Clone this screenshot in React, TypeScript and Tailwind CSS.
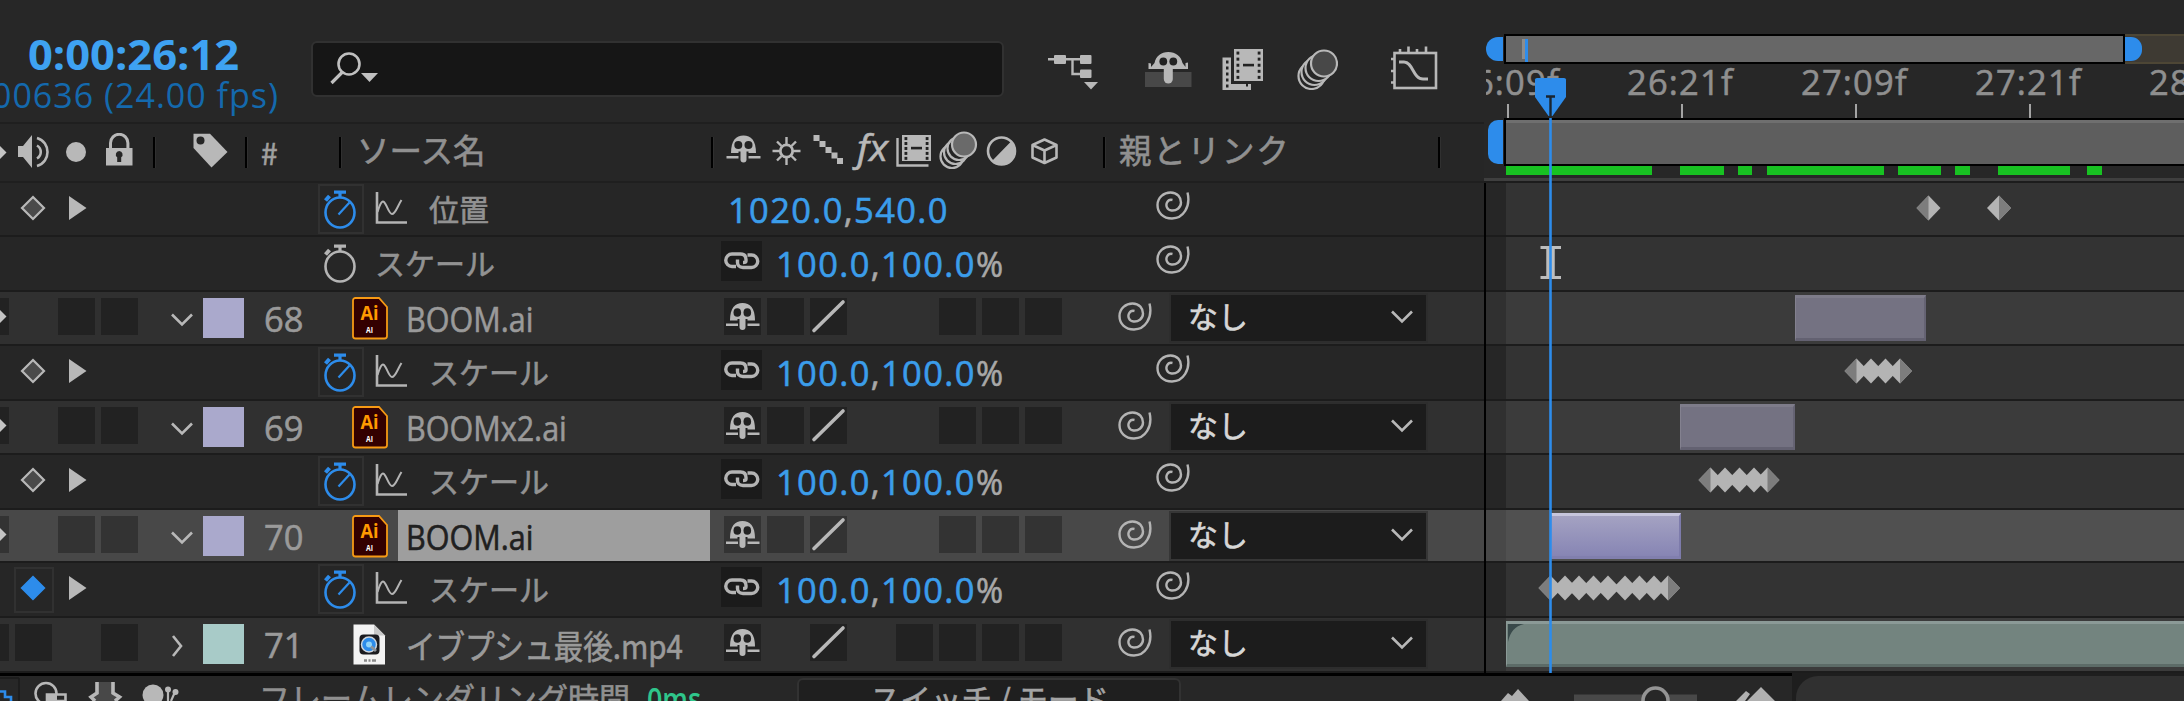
import type { ReactNode } from "react";
import clsx from "clsx";

const LATIN = "font-['Open_Sans','Noto_Sans_CJK_JP',sans-serif]";
const JP = "font-['Noto_Sans_CJK_JP',sans-serif]";

// thickens the thin faces a little, as the panel text is light on dark
const STROKE = "[-webkit-text-stroke:0.6px_currentColor]";

type Row = {
  kind: "layer" | "prop";
  h: number;
  num?: string;
  name: string;
  file?: "ai" | "mp4";
  selected?: boolean;
  animated?: boolean;
  keyOn?: boolean;
  value?: [string, string];
  percent?: boolean;
  bar?: [number, number];
  keys?: number[];
};

// bar and key positions are measured from the left edge of the lane
const ROWS: Row[] = [
  { kind: "prop", h: 54, name: "位置", animated: true, value: ["1020.0", "540.0"], keys: [422.5, 493] },
  { kind: "prop", h: 55, name: "スケール", value: ["100.0", "100.0"], percent: true },
  { kind: "layer", h: 54, num: "68", name: "BOOM.ai", file: "ai", bar: [289, 131] },
  { kind: "prop", h: 55, name: "スケール", animated: true, value: ["100.0", "100.0"], percent: true, keys: [350.5, 365, 379.5, 394] },
  { kind: "layer", h: 54, num: "69", name: "BOOMx2.ai", file: "ai", bar: [174, 115] },
  { kind: "prop", h: 55, name: "スケール", animated: true, value: ["100.0", "100.0"], percent: true, keys: [204.5, 219, 233.5, 248, 261.5] },
  { kind: "layer", h: 53, num: "70", name: "BOOM.ai", file: "ai", selected: true, bar: [45, 130] },
  {
    kind: "prop", h: 55, name: "スケール", animated: true, keyOn: true, value: ["100.0", "100.0"], percent: true,
    keys: [44.5, 59, 73, 87.5, 102, 119, 133.5, 148, 162],
  },
  { kind: "layer", h: 55, num: "71", name: "イブプシュ最後.mp4", file: "mp4", bar: [0, 700] },
];

function Spiral({ className }: { className?: string }) {
  return (
    <svg width="34" height="30" viewBox="0 0 34 30" fill="none" stroke="#b4b4b4" strokeWidth="2.400" className={clsx("shrink-0", className)}>
      <path d="M31.500 1.500C35 16 27 27.500 16 27.500 7 27.500 1.500 21.500 1.500 14 1.500 6.500 8 1.500 14.500 1.500 21.500 1.500 25 6.500 25 11.500 25 17 20 20 15.500 19.500 11 19 9.500 14.500 11 11.500 12.300 9 14.500 8.500 16.500 9" />
    </svg>
  );
}

function Shy({ className }: { className?: string }) {
  return (
    <svg width="36" height="28" viewBox="0 0 36 28" className={clsx("shrink-0", className)}>
      <path d="M5 17.500C5 5 10 0 17.500 0S30 5 30 17.500Z" fill="#b8b8b8" />
      <ellipse cx="12.300" cy="9.500" rx="3.800" ry="4.300" fill="#222" />
      <ellipse cx="22.300" cy="9.500" rx="3.800" ry="4.300" fill="#222" />
      <path d="M12.500 18V16h10v2" fill="#222" />
      <path d="M1 21.700h12M22.500 21.700h12" stroke="#b8b8b8" strokeWidth="2.600" />
      <path d="M14.500 15h6v9a3 3 0 0 1-6 0Z" fill="#b8b8b8" />
    </svg>
  );
}

function Stopwatch({ on }: { on?: boolean }) {
  return (
    <svg width="34" height="39" viewBox="0 0 34 39" fill="none" stroke={on ? "#2d8ceb" : "#b4b4b4"}>
      <ellipse cx="17" cy="22.500" rx="14.500" ry="15" strokeWidth="2.600" />
      <path d="M11 2.200h12M17 2v6" strokeWidth="3.200" />
      <path d="M2.500 10.500 6.500 6" strokeWidth="4" />
      {on && <path d="M15.500 24.500 26.500 12.500" strokeWidth="2.200" />}
    </svg>
  );
}

function GraphIcon() {
  return (
    <svg width="33" height="34" viewBox="0 0 33 34" fill="none" stroke="#b4b4b4">
      <path d="M2 1v30.500h30" strokeWidth="2.600" />
      <path d="M2.500 21C5 13 7 9 9 11c3 3 5 12 8 12 3.500 0 5.500-8 9.500-14" strokeWidth="2" />
    </svg>
  );
}

function Chain() {
  return (
    <svg width="36" height="18" viewBox="0 0 36 18" fill="none" stroke="#b4b4b4" strokeWidth="3.400">
      <path d="M12 14.500H8a6.200 6.200 0 0 1 0-12.500h8.500c4 0 5.500 2.500 5.500 5.500v1.500c0 1-1 1.500-3 1.500" />
      <path d="M23.500 3h4a6.200 6.200 0 0 1 0 12.500H19c-4 0-5.500-2.500-5.500-5V7.500" />
    </svg>
  );
}

function AiIcon() {
  return (
    <svg width="36" height="43" viewBox="0 0 36 43" className="mt-[5px] shrink-0">
      <path d="M3.500 1H27l8 9v29a2.500 2.500 0 0 1-2.500 2.500h-29A2.500 2.500 0 0 1 1 39V3.500A2.500 2.500 0 0 1 3.500 1Z" fill="#300" stroke="#f79a14" strokeWidth="1.800" />
      <text x="17.500" y="23" textAnchor="middle" fontSize="19" fontWeight="700" fill="#ff9a00" fontFamily="Open Sans" textLength="18" lengthAdjust="spacingAndGlyphs">Ai</text>
      <text x="17.500" y="36" textAnchor="middle" fontSize="8.500" fontWeight="700" fill="#fff" fontFamily="Open Sans" textLength="7" lengthAdjust="spacingAndGlyphs">AI</text>
    </svg>
  );
}

function MovieIcon() {
  return (
    <svg width="36" height="42" viewBox="0 0 36 42" className="mt-[6px] shrink-0">
      <path d="M1.500.500H22L33 11.500V40.500H1.500Z" fill="#f3f3f3" />
      <path d="M22 .500V11.500H33Z" fill="#c9c9c9" />
      <rect x="7.500" y="10.500" width="20" height="20" rx="4" fill="#1b1b1f" />
      <circle cx="17" cy="20.500" r="7.500" fill="#2d8ceb" stroke="#cfd6de" strokeWidth="1.500" />
      <circle cx="17" cy="20.500" r="3" fill="#8fd3fa" />
      <path d="M19 22.500 24 27" stroke="#8d949c" strokeWidth="3" />
      <path d="M12 36.500h3M16.500 36.500h2M20 36.500h4" stroke="#8a8a8a" strokeWidth="2.500" />
    </svg>
  );
}

function Chevron({ right, className }: { right?: boolean; className?: string }) {
  return (
    <svg width="22" height="22" viewBox="0 0 22 22" fill="none" stroke="#b8b8b8" strokeWidth="2.600" className={clsx("shrink-0", className)}>
      {right ? <path d="M2 1 10 11 2 21" /> : <path d="M1 5.500 11 15.500 21 5.500" />}
    </svg>
  );
}

function Blur({ w, h, fill }: { w: number; h: number; fill: string }) {
  return (
    <svg width={w} height={h} viewBox="0 0 41 41" preserveAspectRatio="none" fill="#262626" stroke="#b8b8b8" strokeWidth="2.200">
      <circle cx="14.500" cy="27" r="13" />
      <circle cx="17.500" cy="23" r="13" />
      <circle cx="21.500" cy="19" r="13" />
      <circle cx="27" cy="14.500" r="13" fill={fill} />
    </svg>
  );
}

function Divider({ className }: { className?: string }) {
  return <span className={clsx("mt-[13px] h-[31px] w-[3px] shrink-0 border-l-2 border-black bg-[#303030]", className)} />;
}

function Cell({ on, selected, children }: { on?: boolean; selected?: boolean; children?: ReactNode }) {
  return (
    <span className={clsx("mt-[6px] flex h-[37px] w-[37px] shrink-0 items-center justify-center", on && (selected ? "bg-[#333]" : "bg-[#222]"))}>
      {children}
    </span>
  );
}

function LayerRow({ row }: { row: Row }) {
  const { selected } = row;
  const mp4 = row.file === "mp4";
  return (
    <div className={clsx("flex shrink-0 border-b-2 border-[#1c1c1c]", selected ? "bg-[#484848]" : "bg-[#303030]")} style={{ height: row.h }}>
      <div className="flex w-[138px] shrink-0 gap-1.5">
        <span className={clsx("mt-[6px] h-[37px] w-[9px] shrink-0", selected ? "bg-[#333]" : "bg-[#222]")}>
          {!mp4 && (
            <svg width="9" height="37" viewBox="0 0 9 37">
              <path d="M0 12 6.500 18.500 0 25Z" fill="#c4c4c4" />
            </svg>
          )}
        </span>
        <Cell on={mp4} />
        <Cell on={!mp4} selected={selected} />
        <Cell on selected={selected} />
      </div>
      <div className="w-[65px] shrink-0 pt-[17px] pl-[33px]">
        <Chevron right={mp4} />
      </div>
      <div className={clsx("mt-[6px] h-10 w-[41px] shrink-0", mp4 ? "bg-[#a8cbc8]" : "bg-[#aaa9cc]")} />
      <div className={clsx("w-[108px] shrink-0 pt-[9px] pl-[20px] text-[34.500px] leading-9 text-[#9a9a9a]", LATIN, STROKE)}>{row.num}</div>
      {mp4 ? <MovieIcon /> : <AiIcon />}
      <div
        className={clsx(
          "ml-[10px] w-[312px] shrink-0 pl-[8px] whitespace-nowrap",
          selected ? "bg-[#9e9e9e] text-[#202020]" : "text-[#9a9a9a]",
        )}
      >
        <span
          className={clsx(
            "inline-block origin-left",
            STROKE,
            mp4
              ? `${JP} scale-x-[0.895] pt-[7px] text-[33px] leading-10`
              : `${LATIN} scale-x-[0.885] pt-[7px] text-[34.500px] leading-10`,
          )}
        >
          {row.name}
        </span>
      </div>
      <div className="ml-[14px] flex w-[338px] shrink-0 gap-1.5">
        <Cell on selected={selected}>
          <Shy className="mt-[1px]" />
        </Cell>
        <Cell on={!mp4} selected={selected} />
        <Cell on selected={selected}>
          <svg width="37" height="37" viewBox="0 0 37 37">
            <path d="M4 32.500 33 4" stroke="#b8b8b8" strokeWidth="3.600" strokeLinecap="round" />
          </svg>
        </Cell>
        <Cell />
        <Cell on={mp4} />
        <Cell on selected={selected} />
        <Cell on selected={selected} />
        <Cell on selected={selected} />
      </div>
      <Spiral className="mt-[10px] ml-[56px]" />
      <div
        className={clsx(
          "mt-[3px] ml-[19px] flex h-[46px] w-[255px] shrink-0 items-center justify-between bg-[#1c1c1c] pr-[13px] pl-[17px] outline-2",
          selected ? "outline-[#363636]" : "outline-[#2d2d2d]",
        )}
      >
        <span className={clsx("pb-[7px] text-[30px] leading-none text-[#d6d6d6]", JP, STROKE)}>なし</span>
        <Chevron className="mb-0.5" />
      </div>
    </div>
  );
}

function PropRow({ row }: { row: Row }) {
  return (
    <div className="flex shrink-0 border-b-2 border-[#1c1c1c] bg-[#262626]" style={{ height: row.h }}>
      <div className="flex w-[318px] shrink-0">
        {row.animated && (
          <>
            <span className={clsx("mt-1 ml-[14px] flex h-[46px] w-10 items-center justify-center border-2 pr-[2px] pb-1", row.keyOn ? "border-[#313131]" : "border-transparent")}>
              <svg width="26" height="26" viewBox="0 0 26 26" className="shrink-0">
                <path
                  d="M13 2 24 13 13 24 2 13Z"
                  fill={row.keyOn ? "#2d8ceb" : "#4a4a4a"}
                  stroke={row.keyOn ? "#2d8ceb" : "#b8b8b8"}
                  strokeWidth="2.200"
                />
              </svg>
            </span>
            <svg width="18" height="24" viewBox="0 0 18 24" className="mt-[13px] ml-[15px]">
              <path d="M0 0 17.500 12 0 24Z" fill="#b8b8b8" />
            </svg>
          </>
        )}
      </div>
      <span className={clsx("mt-[1px] flex h-[50px] w-[46px] shrink-0 items-center justify-center border-2 pr-0.5", row.animated ? "border-[#313131]" : "border-transparent")}>
        <Stopwatch on={row.animated} />
      </span>
      <div className="flex w-[357px] shrink-0 pl-[11px]">
        {row.animated && (
          <span className="mt-[8px] mr-[21px]">
            <GraphIcon />
          </span>
        )}
        <span className={clsx("pt-[9px] text-[30px] leading-8 whitespace-nowrap text-[#929292]", JP, STROKE)}>{row.name}</span>
      </div>
      <div className="flex w-[435px] shrink-0 text-[#3b9dea]">
        {row.percent ? (
          <span className="mt-1 mr-[14px] flex h-10 w-[41px] shrink-0 items-center justify-center bg-[#1b1b1b]">
            <Chain />
          </span>
        ) : (
          <span className="w-[7px] shrink-0" />
        )}
        <span className={clsx("pt-[9px] text-[34.500px] leading-9 tracking-[1.350px] whitespace-nowrap", LATIN, STROKE)}>
          {row.value?.[0]}
          <span className="text-[#a8a8a8]">,</span>
          {row.value?.[1]}
          {row.percent && <span className="inline-block origin-left scale-x-[0.95] text-[#a8a8a8]">%</span>}
        </span>
      </div>
      <Spiral className="mt-[8px]" />
    </div>
  );
}

function Film({ x, y, w, h }: { x: number; y: number; w: number; h: number }) {
  const holes = [0.08, 0.27, 0.46, 0.65, 0.84];
  return (
    <g>
      <rect x={x} y={y} width={w} height={h} fill="#b8b8b8" />
      {holes.map((t) => (
        <g key={t} fill="#222">
          <rect x={x + 2.5} y={y + t * h} width="2.800" height="3" />
          <rect x={x + w - 5.3} y={y + t * h} width="2.800" height="3" />
        </g>
      ))}
      <rect x={x + w / 2 - 5.5} y={y + h / 2 - 1.2} width="11" height="2.600" fill="#222" />
    </g>
  );
}

function TopBar() {
  return (
    <div className="flex h-[122px] shrink-0 bg-[#272727]">
      <div className={clsx("w-[311px] shrink-0 whitespace-nowrap", LATIN)}>
        <div className="mt-[33px] h-[41px] origin-left scale-x-[1.035] pl-[27px] text-[42px] leading-[42px] font-bold text-[#3ea2f2]">0:00:26:12</div>
        <div className="-ml-[21px] flex w-[300px] justify-end text-[34px] leading-[42px] tracking-[1px] text-[#1469ad]">00636 (24.00 fps)</div>
      </div>
      <div className="mt-[41px] flex h-[56px] w-[693px] shrink-0 items-center rounded-md border-2 border-[#313131] bg-[#161616] pl-[16px]">
        <svg width="50" height="36" viewBox="0 0 50 36">
          <circle cx="20" cy="13" r="10.500" fill="none" stroke="#c0c0c0" strokeWidth="2.600" />
          <path d="M13.500 21 2.500 32" stroke="#c0c0c0" strokeWidth="3.200" />
          <path d="M32 22h17l-8.500 9Z" fill="#c0c0c0" />
        </svg>
      </div>
      <svg width="50" height="36" viewBox="0 0 50 36" className="mt-[54px] ml-[44px] shrink-0">
        <g fill="#b8b8b8">
          <rect x="6" y="1" width="12" height="9" rx="1" />
          <rect x="32" y="1" width="11.500" height="9" rx="1" />
          <rect x="32" y="15.500" width="11.500" height="8.500" rx="1" />
          <path d="M36 28h14l-7 7.500Z" />
        </g>
        <path d="M0 5.200h34M24.500 5v15h8" stroke="#b8b8b8" strokeWidth="2.400" fill="none" />
      </svg>
      <svg width="47" height="36" viewBox="0 0 47 36" className="mt-[51px] ml-[47px] shrink-0">
        <rect x="0" y="21" width="46.500" height="15" fill="#484848" />
        <path d="M3.500 18V12l2.500.500v3.500l3.500-4C11 5 16 1 23.300 1S36 5 37.500 12l3 4V12l2.500-.500v6.500Z" fill="#b8b8b8" />
        <circle cx="18.300" cy="10.500" r="3.900" fill="#222" />
        <circle cx="28.300" cy="10.500" r="3.900" fill="#222" />
        <path d="M18.800 16h9v12a4.500 4.500 0 0 1-9 0Z" fill="#b8b8b8" />
      </svg>
      <svg width="42" height="42" viewBox="0 0 42 42" className="mt-[49px] ml-[30px] shrink-0">
        <path d="M.500 8.500H9V35H29V41H.500Z" fill="#b8b8b8" />
        <path d="M4 11.500h2.500v3H4zM4 17.500h2.500v3H4zM4 23.500h2.500v3H4zM4 29.500h2.500v3H4zM4 35.500h2.500v3H4zM24 34h2v3.500h-2z" fill="#222" />
        <Film x={12} y={0} w={29} h={32} />
      </svg>
      <span className="mt-[49px] ml-[33px] shrink-0">
        <Blur w={41} h={41} fill="#484848" />
      </span>
      <svg width="48" height="44" viewBox="0 0 48 44" fill="none" stroke="#b8b8b8" strokeWidth="2.600" className="mt-[46px] ml-[52px] shrink-0">
        <rect x="4.500" y="7" width="41.500" height="35" />
        <path d="M10 7V3M18.500 7V.500M27 7V3M36 7V.500M4 13H1M4 25H1M4 36.500H1" />
        <path d="M9 16h5c9 0 9 17 19 17h5" strokeWidth="3" />
      </svg>
    </div>
  );
}

function ColumnHeader() {
  return (
    <div className={clsx("flex h-[61px] shrink-0 border-t-2 border-b-2 border-[#1f1f1f] bg-[#262626] leading-none whitespace-nowrap text-[#909090]", JP)}>
      <div className="flex w-[153px] shrink-0">
        <svg width="138" height="36" viewBox="0 0 138 36" className="mt-[9px]">
          <path d="M0 13 6.500 19.500 0 26Z" fill="#c4c4c4" />
          <path d="M18 13h5l9-11v33l-9-11h-5Z" fill="#b8b8b8" />
          <path d="M37 12.500c5 3 5 10 0 13M37 5c14 4 14 24 0 28" fill="none" stroke="#b8b8b8" strokeWidth="2.600" />
          <circle cx="76" cy="19" r="10" fill="#b8b8b8" />
          <path d="M106 15h26.500v17.500H106z" fill="#b8b8b8" />
          <path d="M110.500 15V10a8.700 8.700 0 0 1 17.400 0v5" fill="none" stroke="#b8b8b8" strokeWidth="3" />
          <path d="M119.200 18a3.500 3.500 0 0 1 2 6.300V29h-4v-4.700a3.500 3.500 0 0 1 2-6.300Z" fill="#262626" />
        </svg>
      </div>
      <Divider />
      <svg width="36" height="35" viewBox="0 0 36 35" className="mt-[9px] ml-[37px] shrink-0">
        <path d="M.500.800H17L34.500 19 18.500 34.500.500 15Z" fill="#b8b8b8" />
        <circle cx="7.500" cy="7.500" r="4" fill="#262626" />
      </svg>
      <Divider className="ml-[16px]" />
      <div className={clsx("w-[91px] shrink-0 pt-[13px] pl-[13px] text-[30px] text-[#a0a0a0]", STROKE)}>#</div>
      <Divider />
      <div className={clsx("w-[369px] shrink-0 pt-[9px] pl-[15px] text-[32.500px]", STROKE)}>ソース名</div>
      <Divider />
      <svg width="344" height="44" viewBox="0 0 344 44" className="mt-[6px] ml-[11px] shrink-0">
        <g transform="translate(1 5.500)">
          <path d="M5 17.500C5 5 10 0 17.500 0S30 5 30 17.500Z" fill="#b8b8b8" />
          <circle cx="12.300" cy="9.500" r="4" fill="#222" />
          <circle cx="22.500" cy="9.500" r="4" fill="#222" />
          <path d="M12.500 18V16h10v2" fill="#222" />
          <path d="M.500 21.700h12M22.500 21.700h12" stroke="#b8b8b8" strokeWidth="2.600" />
          <path d="M14.500 15h6v9a3 3 0 0 1-6 0Z" fill="#b8b8b8" />
        </g>
        <g stroke="#b8b8b8" strokeWidth="2.400" fill="none">
          <circle cx="61.500" cy="21" r="6.200" strokeWidth="2.800" />
          <path d="M61.500 7v7M61.500 28v7M47.500 21h7M68.500 21h7M52 11.500l4.500 4.500M71 11.500 66.500 16M52 30.500l4.500-4.500M71 30.500 66.500 26" />
        </g>
        <path d="M88.500 5h6v6h-6zM94.500 11h6v6h-6zM100.500 17h6v6h-6zM106.500 22.500h6v6h-6zM112 28h6v6h-6z" fill="#b8b8b8" />
        <text x="132" y="30.500" fontSize="37" fontStyle="italic" fontFamily="Open Sans" fill="#b8b8b8" stroke="#b8b8b8" strokeWidth=".600" textLength="31" lengthAdjust="spacingAndGlyphs">fx</text>
        <path d="M172.500 8v27.500h31" fill="none" stroke="#b8b8b8" strokeWidth="2.400" />
        <Film x={177} y={5} w={29} h={26} />
        <g fill="#262626" stroke="#b8b8b8" strokeWidth="2.200">
          <circle cx="227" cy="26.500" r="11.500" />
          <circle cx="230.500" cy="22.500" r="11.500" />
          <circle cx="234" cy="18.500" r="11.500" />
          <circle cx="239" cy="14.500" r="12" fill="#6a6a6a" />
        </g>
        <circle cx="276.500" cy="21" r="13.500" fill="none" stroke="#b8b8b8" strokeWidth="2.600" />
        <path d="M286.500 11 267 31a13.500 13.500 0 0 0 19.500-20Z" fill="#b8b8b8" />
        <path d="M319.500 9.500 331.500 15v12.500l-12 5.500-12-5.500V15Zm-12 5.500 12 5.500 12-5.500m-12 5.500V33" fill="none" stroke="#b8b8b8" strokeWidth="2.600" strokeLinejoin="round" />
      </svg>
      <Divider className="ml-[34px]" />
      <div className={clsx("w-[332px] shrink-0 pt-[9px] pl-[13px] text-[32.500px] tracking-[1.800px]", STROKE)}>親とリンク</div>
      <Divider />
    </div>
  );
}

const LABELS = ["26:09f", "26:21f", "27:09f", "27:21f", "28:09f"];

// cached frames: start and width
const CACHED = [[0, 146], [174, 44], [232, 14], [261, 117], [392, 43], [449, 15], [492, 72], [581, 15]];

function TimeRuler() {
  return (
    <div className="flex h-[183px] shrink-0 flex-col bg-[#272727]">
      <div className="mt-[34px] flex h-[30px] shrink-0 pl-0.5">
        <span className="mt-[3px] h-6 w-[17px] shrink-0 rounded-l-[12px] bg-[#2d8ceb]" />
        <div className="ml-px flex w-[621px] shrink-0 border-2 border-black bg-[#676767]">
          <span className="mt-[3px] ml-[16px] h-5 w-[3px] bg-[#8d8d8d]" />
          <span className="mt-[3px] h-[23px] w-[3px] bg-[#2d8ceb]" />
        </div>
        <div className="flex-1 border-y-2 border-[#4d4635] bg-[#3e3a33] pt-px">
          <div className="h-6 w-[17px] rounded-r-[11px] bg-[#2d8ceb]" />
        </div>
      </div>
      <div className="ml-0.5 flex h-[54px] shrink-0 overflow-hidden">
        <div className="-ml-[33px] flex">
          {LABELS.map((label) => (
            <div key={label} className={clsx("w-[174px] shrink-0", LATIN)}>
              <div className={clsx("h-10 text-[34.500px] leading-9 tracking-[1.200px] text-[#8f8f8f]", STROKE)}>{label}</div>
              <div className="ml-[54px] h-[14px] w-0.5 bg-[#a4a4a4]" />
            </div>
          ))}
        </div>
      </div>
      <div className="flex h-12 shrink-0 pl-[4px]">
        <span className="mt-[2px] h-[44px] w-[15px] shrink-0 rounded-l-[10px] bg-[#2d8ceb]" />
        <div className="ml-px flex-1 border-y-2 border-l-2 border-black">
          <div className="h-[3px] bg-[#6f6f6f]" />
          <div className="h-[41px] bg-[#5e5e5e]" />
        </div>
      </div>
      <div className="relative ml-[22px] h-[11px] shrink-0">
        {CACHED.map(([x, w]) => (
          <span key={x} className="absolute top-0 h-[9px] bg-[#18c222]" style={{ left: x, width: w }} />
        ))}
      </div>
      <div className="mt-px h-[3px] shrink-0 bg-[#3f3f3f]" />
      <div className="h-[2px] shrink-0 bg-[#1c1c1c]" />
    </div>
  );
}

function Keys({ keys }: { keys: number[] }) {
  const first = keys[0];
  const last = keys[keys.length - 1];
  return (
    <svg width="678" height="50" viewBox="0 0 678 50" className="absolute top-0 left-0">
      {keys.map((x) => (
        <path key={x} d={`M${x - 12} 25 ${x} 12.500 ${x + 12} 25 ${x} 37.500Z`} fill="#b4b4b4" />
      ))}
      <path d={`M${first - 12} 25 ${first} 12.500V37.500Z`} fill="#7d7d7d" />
      <path d={`M${last + 12} 25 ${last} 12.500V37.500Z`} fill="#7d7d7d" />
    </svg>
  );
}

function Lane({ row }: { row: Row }) {
  const layer = row.kind === "layer";
  const mp4 = row.file === "mp4";
  return (
    <div
      className={clsx("flex shrink-0 border-b-2 border-[#1c1c1c]", row.selected ? "bg-[#484848]" : layer ? "bg-[#303030]" : "bg-[#262626]")}
      style={{ height: row.h }}
    >
      <div className={clsx("relative ml-[20px] flex-1 overflow-hidden", row.selected ? "bg-[#505050]" : layer ? "bg-[#3b3b3b]" : "bg-[#333]")}>
        {row.bar && (
          <div
            className={clsx(
              "absolute top-[3px] h-[46px] border-t-[3px] border-r-2 border-b-[3px] border-l",
              mp4 && "border-[#8b9a97] border-b-[#5c6b67] bg-[#73847f]",
              row.selected && "border-t-[#c6c5dc] border-r-[#7d7bab] border-b-[#817fae] border-l-[#9a98c0] bg-linear-to-b from-[#a4a2c2] to-[#8785b4]",
              !mp4 && !row.selected && "border-t-[#7e7c8a] border-r-[#656373] border-b-[#636171] border-l-[#83818f] bg-[#747282]",
            )}
            style={{ left: row.bar[0], width: row.bar[1] }}
          >
            {mp4 && (
              <svg width="16" height="18" viewBox="0 0 16 18" className="ml-px">
                <path d="M0 0H16C7 2 2 8 0 18Z" fill="#39494a" />
              </svg>
            )}
          </div>
        )}
        {row.keys && <Keys keys={row.keys} />}
      </div>
    </div>
  );
}

function Playhead() {
  return (
    <svg width="34" height="595" viewBox="0 0 34 595" className="absolute top-[78px] left-[50px]">
      {/* text cursor left hovering over the second row */}
      <path d="M6.500 169.500h8.500M18 169.500h9M6.500 199.500h8.500M18 199.500h9" stroke="#bdbdbd" strokeWidth="3" />
      <path d="M16.500 168v33" stroke="#bdbdbd" strokeWidth="8.500" />
      <path d="M1 1.500Q1 0 3 0H30Q32 0 32 1.500V19L18.500 38H14.500L1 19Z" fill="#2d8ceb" />
      <path d="M16.500 40v555" stroke="#2d8ceb" strokeWidth="2.600" />
      <path d="M12 18.500h9M16.500 18v20" stroke="#1a2530" strokeWidth="2.400" />
    </svg>
  );
}

function Footer() {
  return (
    <div className={clsx("flex h-[28px] shrink-0 overflow-hidden bg-[#272727] leading-none whitespace-nowrap", JP)}>
      <div className="flex w-[1792px] shrink-0 border-t-[3px] border-black">
        <svg width="190" height="25" viewBox="0 0 190 25" className="shrink-0">
          <path d="M19 2V25M0 2H19" stroke="#1b1b1b" strokeWidth="1.500" fill="none" />
          <path d="M0 15.500H5V21H11V25" stroke="#2d8ceb" strokeWidth="2.600" fill="none" />
          <circle cx="46" cy="17.500" r="10.500" fill="none" stroke="#b8b8b8" strokeWidth="2.600" />
          <path d="M47 18.500H65.500V25H47Z" fill="#262626" stroke="#b8b8b8" strokeWidth="2.600" />
          <path d="M47 18.500H57V25H47Z" fill="#b8b8b8" />
          <path d="M97 6H113V16L118 25H92L97 16Z" fill="#484848" />
          <path d="M97 6V17L91 21 95 25M113 6V17L119.500 21 115 25" stroke="#b8b8b8" strokeWidth="3.600" fill="none" />
          <circle cx="153" cy="19" r="10.500" fill="#b8b8b8" />
          <path d="M168 25V13M175 16 171 25" stroke="#b8b8b8" strokeWidth="2.200" />
          <circle cx="168" cy="13.500" r="3" fill="#b8b8b8" />
          <circle cx="175.500" cy="16" r="3" fill="#b8b8b8" />
        </svg>
        <div className={clsx("ml-[69px] w-[388px] shrink-0 pt-[5px] text-[31px] text-[#909090]", STROKE)}>フレームレンダリング時間</div>
        <div className={clsx("w-[150px] shrink-0 origin-left scale-x-[0.84] pt-[7px] text-[32px] font-semibold text-[#2fc58b]", LATIN)}>0ms</div>
        <div className={clsx("mt-[2px] h-10 w-[384px] shrink-0 rounded-md border-2 border-[#323232] bg-[#1f1f1f] pt-[3px] pl-[71px] text-[30.500px] text-[#a4a4a4]", STROKE)}>
          スイッチ / モード
        </div>
        <svg width="610" height="25" viewBox="0 0 610 25" className="shrink-0">
          <path d="M320 25 327 17 331 20 337 13 348 25Z" fill="#b0b0b0" />
          <path d="M393 18.500H516V25H393Z" fill="#484848" />
          <circle cx="474.500" cy="24.500" r="12.500" fill="#272727" stroke="#949494" strokeWidth="3.600" />
          <path d="M555 25 565 15 569 18 564 25ZM566 25 580 11 594 25Z" fill="#b0b0b0" />
        </svg>
      </div>
      <div className="flex-1 bg-[#1e1e1e] pt-[3px] pl-[4px]">
        <div className="h-10 rounded-tl-[22px] bg-[#303030]" />
      </div>
    </div>
  );
}

export default function App() {
  return (
    <div className="flex h-[701px] w-[2184px] flex-col overflow-hidden bg-[#272727]">
      <div className="flex h-[673px] shrink-0">
        <div className="flex w-[1484px] shrink-0 flex-col overflow-hidden">
          <TopBar />
          <ColumnHeader />
          {ROWS.map((row, i) => (row.kind === "layer" ? <LayerRow key={i} row={row} /> : <PropRow key={i} row={row} />))}
        </div>
        <div className="relative flex flex-1 flex-col overflow-hidden">
          <TimeRuler />
          <div className="flex flex-col border-l-2 border-black">
            {ROWS.map((row, i) => (
              <Lane key={i} row={row} />
            ))}
          </div>
          <Playhead />
        </div>
      </div>
      <Footer />
    </div>
  );
}
